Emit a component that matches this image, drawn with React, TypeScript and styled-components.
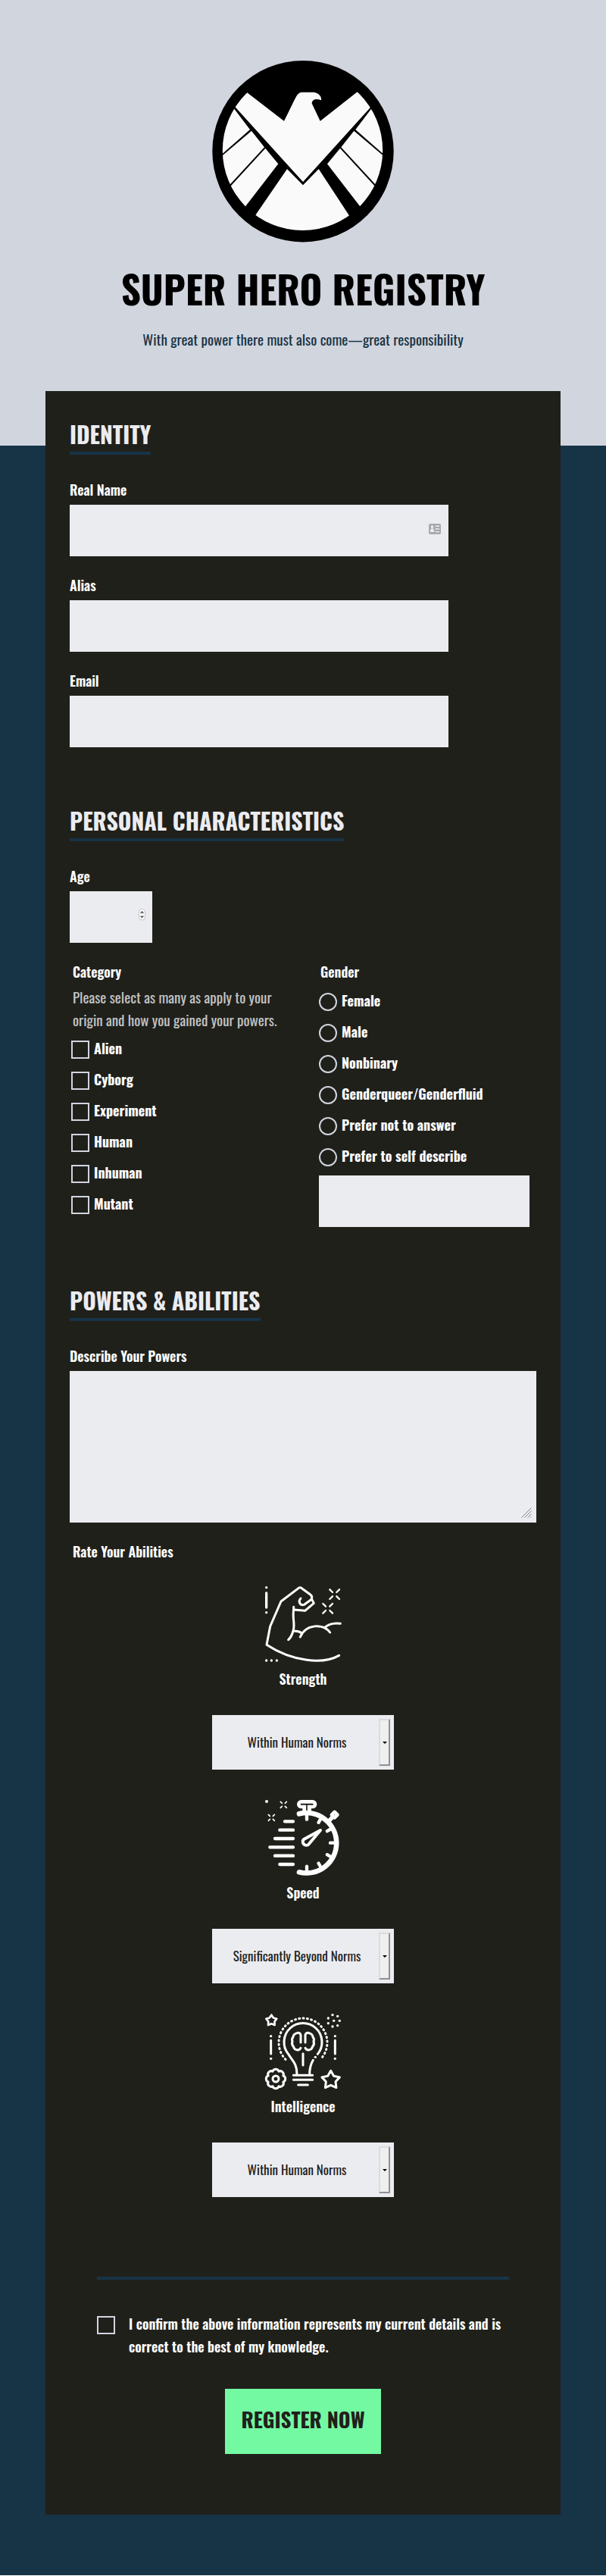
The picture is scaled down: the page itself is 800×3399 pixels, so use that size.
import React from 'react';
import styled, { createGlobalStyle } from 'styled-components';

const color = {
  mist: '#d1d5de',
  navy: '#173346',
  ink: '#20201b',
  field: '#ebecf0',
  mint: '#73f9a2',
};

const condensed = "Oswald, 'Roboto Condensed', 'Open Sans Condensed', 'Liberation Sans Narrow', 'Liberation Sans', sans-serif";

const GlobalStyle = createGlobalStyle`
  *, *::before, *::after { box-sizing: border-box; }
  html { background: #fff; }
  body {
    margin: 0;
    color: #fff;
    font-family: ${condensed};
    font-size: 18px;
    line-height: 30px;
  }
  input, select, textarea, button { font: inherit; }
`;

const Page = styled.div`
  padding-bottom: 80px;
  background: ${color.navy};
`;

const Header = styled.header`
  display: flex;
  flex-direction: column;
  align-items: center;
  padding: 80px 20px 126px;
  background: ${color.mist};
  text-align: center;
`;

const Logo = styled.svg`
  width: 240px;
  height: 240px;
  margin-bottom: 24px;
`;

const Title = styled.h1`
  margin: 0 0 16px;
  color: #000;
  font-size: 51px;
  font-weight: 900;
  line-height: 72px;
  text-transform: uppercase;
`;

const Tagline = styled.p`
  margin: 0;
  color: ${color.navy};
  font-size: 19px;
`;

const Form = styled.form`
  display: flex;
  flex-direction: column;
  width: 85%;
  margin: -72px auto 0;
  padding: 34px 32px 80px;
  background: ${color.ink};
`;

const Section = styled.section`
  display: flex;
  flex-direction: column;
  align-items: flex-start;
  gap: 23px;
  margin-bottom: 74px;
`;

const SectionTitle = styled.h2`
  margin: 0 0 8px;
  border-bottom: 4px solid ${color.navy};
  color: ${color.field};
  font-size: 30px;
  font-weight: 700;
  line-height: 46px;
  text-transform: uppercase;
`;

const Field = styled.div<{ $width?: string }>`
  display: flex;
  flex-direction: column;
  gap: 5px;
  width: ${(p) => p.$width ?? '500px'};
  max-width: 100%;
`;

const Label = styled.label`
  font-weight: 600;
`;

const InputWrap = styled.div`
  position: relative;
  display: flex;
`;

const TextInput = styled.input`
  width: 100%;
  height: 68px;
  padding: 0 16px;
  border: 0;
  border-radius: 0;
  background: ${color.field};
  color: ${color.ink};
  appearance: textfield;
`;

const SelfDescribeInput = styled(TextInput)`
  display: block;
  max-width: 278px;
`;

const ContactBadge = styled.svg`
  position: absolute;
  top: 25px;
  right: 10px;
  width: 16px;
  height: 14px;
`;

const Stepper = styled.svg`
  position: absolute;
  top: 23px;
  right: 9px;
  width: 9px;
  height: 16px;
`;

const TextArea = styled.textarea`
  display: block;
  width: 100%;
  height: 200px;
  padding: 16px;
  border: 0;
  border-radius: 0;
  background: ${color.field};
  color: ${color.ink};
  resize: vertical;
  &::-webkit-resizer {
    background: transparent;
  }
`;

const ResizeGrip = styled.svg`
  position: absolute;
  right: 6px;
  bottom: 6px;
  width: 14px;
  height: 14px;
  stroke: #85868a;
  pointer-events: none;
`;

const Columns = styled.div`
  display: grid;
  grid-template-columns: 1fr 1fr;
  gap: 42px;
  width: 100%;
`;

const Fieldset = styled.fieldset<{ $inset?: boolean }>`
  min-width: 0;
  width: 100%;
  margin: 0;
  padding: 0 ${(p) => (p.$inset ? 2 : 0)}px;
  border: 0;
`;

const Legend = styled.legend`
  padding: 0 2px;
  font-weight: 600;
`;

const Help = styled.p`
  margin: 3px 0 0;
  padding-left: 2px;
  color: #c3c4c4;
  font-size: 19px;
  font-weight: 400;
`;

const Options = styled.div`
  display: flex;
  flex-direction: column;
  gap: 11px;
  padding: 8px 0 11px;
`;

const Option = styled.label`
  display: flex;
  gap: 6px;
  font-weight: 700;
`;

const Tick = styled.input`
  flex: none;
  width: 24px;
  height: 24px;
  margin: 5px 0 0;
  border: 2px solid ${color.mist};
  border-radius: ${(p) => (p.type === 'radio' ? '50%' : '0')};
  background: transparent;
  appearance: none;
  &:checked {
    background: ${color.mint};
    box-shadow: inset 0 0 0 3px ${color.ink};
  }
`;

const Abilities = styled.div`
  display: flex;
  flex-direction: column;
  align-items: center;
  gap: 40px;
  padding-top: 31px;
`;

const Ability = styled.div`
  display: flex;
  flex-direction: column;
  align-items: center;
`;

const AbilityIcon = styled.svg`
  width: 100px;
  height: 100px;
  margin-bottom: 7px;
  overflow: visible;
  fill: none;
  stroke: #fff;
  stroke-linecap: round;
  stroke-linejoin: round;
`;

const SelectWrap = styled.div`
  position: relative;
  width: 240px;
  height: 72px;
  margin-top: 33px;
`;

const Select = styled.select`
  width: 100%;
  height: 100%;
  padding: 0 21px 0 5px;
  border: 0;
  border-radius: 0;
  background: ${color.field};
  color: ${color.ink};
  font-size: 17px;
  text-align: center;
  text-align-last: center;
  appearance: none;
`;

const SelectArrow = styled.span`
  position: absolute;
  top: 5px;
  right: 5px;
  bottom: 5px;
  display: flex;
  align-items: center;
  justify-content: center;
  width: 15px;
  border: 2px solid;
  border-color: #dcdcdc #8f8f8f #8f8f8f #dcdcdc;
  background: #efefef;
  pointer-events: none;
  &::before {
    content: '';
    border: 3px solid transparent;
    border-top-color: #000;
    border-bottom: 0;
  }
`;

const Footer = styled.div`
  display: flex;
  flex-direction: column;
  align-items: center;
  margin: 31px 36px 0;
  padding-top: 43px;
  border-top: 4px solid ${color.navy};
`;

const Confirm = styled.label`
  display: flex;
  gap: 18px;
  width: 100%;
  font-weight: 600;
`;

const Submit = styled.button`
  height: 86px;
  margin-top: 41px;
  padding: 0 22px 6px;
  border: 0;
  background: ${color.mint};
  color: ${color.ink};
  font-size: 27px;
  font-weight: 700;
  text-transform: uppercase;
`;

const Feathers = () => (
  <>
    <path d="M50 91 20 51.5-20 60 5 130.5z" />
    <path d="M52 92.7 69 114.3 13 175 4 133.4z" />
    <path d="M70.3 115.7 87.3 136.3 34 205.3 14 177z" />
  </>
);

const EagleLogo = () => (
  <Logo viewBox="0 0 240 240" role="img" aria-label="Eagle emblem">
    <clipPath id="eagle-disc">
      <circle cx="119.5" cy="118.4" r="105.7" />
    </clipPath>
    <circle cx="120" cy="119.7" r="119.7" />
    <g clipPath="url(#eagle-disc)" fill="#fafafa">
      <path d="M34.7 33.3 95 79.7C102 66 106 57 111 47.5Q114 41.7 119 41.7H133.3C140 42 145 47 144 52.2 137 49.5 131.7 51.5 131.7 56.5L142.7 79.7 205 30.8 226 43 120 160 14 43z" />
      <Feathers />
      <g transform="translate(239.3 0) scale(-1 1)">
        <Feathers />
      </g>
      <path d="M99 143 120 164.3 140.7 143 200 233.4H37z" />
    </g>
  </Logo>
);

const Sparkle = ({ x, y, near, far, weight }: { x: number; y: number; near: number; far: number; weight: number }) => (
  <path
    strokeWidth={weight}
    transform={`translate(${x} ${y})`}
    d={`M${near} ${near}L${far} ${far}M-${near} ${near}L-${far} ${far}M${near}-${near}L${far}-${far}M-${near}-${near}L-${far}-${far}`}
  />
);

const Dots = ({ points, r = 5 }: { points: number[][]; r?: number }) => (
  <g fill="#fff" stroke="none">
    {points.map(([x, y]) => (
      <circle key={`${x}-${y}`} cx={x} cy={y} r={r} />
    ))}
  </g>
);

const StrengthIcon = () => (
  <AbilityIcon viewBox="0 0 300 300" strokeWidth="9" aria-hidden="true">
    <path d="M293 274C230 310 110 300 6 232L20 159 63 60 133 7Q139 3 145 8L179 33Q188 39 184 50L193 67 158 97 113 93" />
    <path d="M141 48C129 60 138 78 155 73L184 52" />
    <path d="M113 82V93C107 130 120 150 111 177Q105 200 92 212M111 177Q132 176 146 186M139 201C160 150 230 145 257 183M235 164Q260 142 298 148" />
    <path d="M5 27V84" strokeWidth="10" />
    <Dots points={[[5, 5], [5, 104], [5, 294], [25, 294], [46, 294]]} />
    <Sparkle x={275} y={32} near={8} far={19} weight={7} />
    <Sparkle x={248} y={88} near={8} far={19} weight={7} />
  </AbilityIcon>
);

const SpeedIcon = () => (
  <AbilityIcon viewBox="0 0 300 300" strokeWidth="13" aria-hidden="true">
    <Dots points={[[6, 6]]} r={6} />
    <Sparkle x={73} y={19} near={6} far={12} weight={5} />
    <Sparkle x={25} y={70} near={6} far={12} weight={5} />
    <path d="M78 85H111M58 119H111M39 153H111M19 187H111M39 221H111M58 255H111" />
    <path strokeWidth="20" d="M135 55A119 119 0 1 1 135 286" />
    {[-90, -60, -30, 0, 30, 60, 90].map((angle) => (
      <path key={angle} d="M93 0H112" transform={`translate(165 170) rotate(${angle})`} />
    ))}
    <path d="M148 30H183V45H148z" fill="#fff" stroke="none" />
    <rect x="133" y="7" width="65" height="20" rx="10" strokeWidth="14" />
    <path d="M165 17V42" stroke={color.ink} strokeWidth="5" strokeLinecap="butt" />
    <path d="M252 84 265 70" strokeWidth="16" />
    <rect x="267" y="51" width="16" height="16" strokeWidth="14" transform="rotate(45 275 59)" />
    <path strokeWidth="12" d="M219 120 153 156A13 13 0 1 0 173 175z" />
  </AbilityIcon>
);

const starPoints = (cx: number, cy: number, outer: number, inner: number) =>
  Array.from({ length: 10 }, (_, i) => {
    const r = i % 2 ? inner : outer;
    const a = (i * Math.PI) / 5 - Math.PI / 2;
    return `${(cx + r * Math.cos(a)).toFixed(1)},${(cy + r * Math.sin(a)).toFixed(1)}`;
  }).join(' ');

const gearPath = (cx: number, cy: number, r: number) =>
  Array.from({ length: 9 }, (_, i) => {
    const a = ((i + 0.5) * Math.PI) / 4;
    const at = `${(cx + r * Math.cos(a)).toFixed(1)} ${(cy + r * Math.sin(a)).toFixed(1)}`;
    return i ? `A13 13 0 0 1 ${at}` : `M${at}`;
  }).join('') + 'z';

const brainHalf = 'M141 114V84Q138 74 128 76 112 80 111 92 104 100 108 110 104 122 112 130 115 142 128 144 138 144 141 136';

const IntelligenceIcon = () => (
  <AbilityIcon viewBox="0 0 300 300" strokeWidth="9" aria-hidden="true">
    <path d="M126 240C126 195 106 185 92 160A75 75 0 1 1 208 160M190 184Q176 208 176 240" />
    <path d="M112 244H188M112 262H188M131 282H169M150 158V204" />
    <path d="M81 181A96 96 0 1 1 219 181" strokeDasharray="3 13" />
    <path d={brainHalf} />
    <path d={brainHalf} transform="translate(300 0) scale(-1 1)" />
    <path d="M23 106V159M277 106V159" />
    <Dots
      points={[
        [199, 172], [23, 89], [23, 178], [277, 89], [277, 178],
        [267, 5], [287, 10], [295, 28], [287, 47], [267, 51], [250, 38], [250, 18], [272, 28],
      ]}
    />
    <polygon points={starPoints(25, 27, 22, 13)} strokeWidth="8" />
    <polygon points={starPoints(260, 263, 37, 20)} />
    <path d={gearPath(42, 258, 32)} />
    <circle cx="42" cy="258" r="12" />
  </AbilityIcon>
);

const levels = ['Below Human Norms', 'Within Human Norms', 'Slightly Beyond Norms', 'Significantly Beyond Norms'];

const abilities = [
  { id: 'strength', name: 'Strength', level: levels[1], Icon: StrengthIcon },
  { id: 'speed', name: 'Speed', level: levels[3], Icon: SpeedIcon },
  { id: 'intelligence', name: 'Intelligence', level: levels[1], Icon: IntelligenceIcon },
];

const categories = ['Alien', 'Cyborg', 'Experiment', 'Human', 'Inhuman', 'Mutant'];
const genders = ['Female', 'Male', 'Nonbinary', 'Genderqueer/Genderfluid', 'Prefer not to answer', 'Prefer to self describe'];

export default function App() {
  return (
    <Page>
      <GlobalStyle />
      <Header>
        <EagleLogo />
        <Title>Super Hero Registry</Title>
        <Tagline>With great power there must also come—great responsibility</Tagline>
      </Header>

      <Form onSubmit={(e) => e.preventDefault()}>
        <Section>
          <SectionTitle>Identity</SectionTitle>
          <Field>
            <Label htmlFor="real-name">Real Name</Label>
            <InputWrap>
              <TextInput id="real-name" name="realName" type="text" />
              <ContactBadge viewBox="0 0 16 14" aria-hidden="true">
                <rect width="16" height="14" rx="2" fill="#a9a9ab" />
                <path
                  fill={color.field}
                  d="M4.5 2.2a1.7 1.7 0 0 1 1 3.1V7C7 7.4 7 8.5 7 11H2C2 8.5 2 7.4 3.5 7V5.3a1.7 1.7 0 0 1 1-3.1zM8.5 2.5H14V4H8.5zM8.5 6.2H14V7.7H8.5zM8.5 10H14V11.3H8.5z"
                />
              </ContactBadge>
            </InputWrap>
          </Field>
          <Field>
            <Label htmlFor="alias">Alias</Label>
            <TextInput id="alias" name="alias" type="text" />
          </Field>
          <Field>
            <Label htmlFor="email">Email</Label>
            <TextInput id="email" name="email" type="email" />
          </Field>
        </Section>

        <Section>
          <SectionTitle>Personal Characteristics</SectionTitle>
          <Field $width="109px">
            <Label htmlFor="age">Age</Label>
            <InputWrap>
              <TextInput id="age" name="age" type="number" />
              <Stepper viewBox="0 0 9 16" aria-hidden="true">
                <rect x="0.5" y="0.5" width="8" height="14.5" rx="4" fill="#fff" stroke="#bfbfc2" />
                <path d="M2.7 6 4.5 4 6.3 6M2.7 9.5 4.5 11.5 6.3 9.5" fill="none" stroke="#444" strokeWidth="1.3" />
              </Stepper>
            </InputWrap>
          </Field>
          <Columns>
            <Fieldset $inset>
              <Legend>Category</Legend>
              <Help>Please select as many as apply to your origin and how you gained your powers.</Help>
              <Options>
                {categories.map((name) => (
                  <Option key={name}>
                    <Tick type="checkbox" name="category" value={name} />
                    {name}
                  </Option>
                ))}
              </Options>
            </Fieldset>
            <Fieldset>
              <Legend>Gender</Legend>
              <Options>
                {genders.map((name) => (
                  <Option key={name}>
                    <Tick type="radio" name="gender" value={name} />
                    {name}
                  </Option>
                ))}
              </Options>
              <SelfDescribeInput type="text" name="genderDescription" aria-label="Self describe" />
            </Fieldset>
          </Columns>
        </Section>

        <Section>
          <SectionTitle>Powers &amp; Abilities</SectionTitle>
          <Field $width="100%">
            <Label htmlFor="powers">Describe Your Powers</Label>
            <InputWrap>
              <TextArea id="powers" name="powers" />
              <ResizeGrip viewBox="0 0 14 14" aria-hidden="true">
                <path d="M0.5 13.5 13.5 0.5M4.5 13.5 13.5 4.5M8.5 13.5 13.5 8.5M12 13.5 13.5 12" />
              </ResizeGrip>
            </InputWrap>
          </Field>
          <Fieldset $inset>
            <Legend>Rate Your Abilities</Legend>
            <Abilities>
              {abilities.map(({ id, name, level, Icon }) => (
                <Ability key={id}>
                  <Icon />
                  <Label htmlFor={id}>{name}</Label>
                  <SelectWrap>
                    <Select id={id} name={id} defaultValue={level}>
                      {levels.map((option) => (
                        <option key={option}>{option}</option>
                      ))}
                    </Select>
                    <SelectArrow />
                  </SelectWrap>
                </Ability>
              ))}
            </Abilities>
          </Fieldset>
        </Section>

        <Footer>
          <Confirm>
            <Tick type="checkbox" name="confirm" />
            I confirm the above information represents my current details and is correct to the best of my knowledge.
          </Confirm>
          <Submit type="submit">Register Now</Submit>
        </Footer>
      </Form>
    </Page>
  );
}
